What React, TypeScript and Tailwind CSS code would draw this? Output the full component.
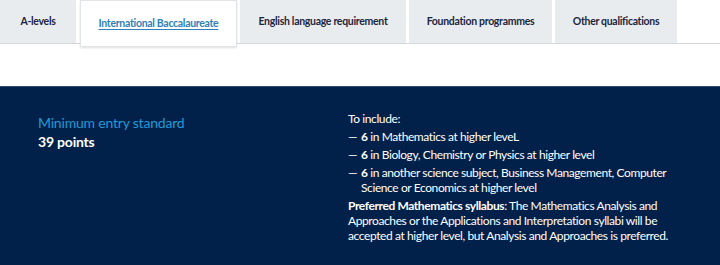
const TABS = [
  { label: 'A-levels', w: 'w-[76px]' },
  { label: 'International Baccalaureate', w: 'w-[157px]', active: true },
  { label: 'English language requirement', w: 'w-[166px]' },
  { label: 'Foundation programmes', w: 'w-[143px]' },
  { label: 'Other qualifications', w: 'w-[122px]' },
]

export default function App() {
  return (
    <div className="w-[720px] h-[265px] bg-white overflow-hidden" style={{ fontFamily: 'Lato, "Open Sans", sans-serif' }}>
      <div className="relative h-[44px] border-b border-[#d4d8dc] flex items-stretch gap-[3px]">
        {TABS.map((tab) =>
          tab.active ? (
            <div
              key={tab.label}
              className={`${tab.w} h-[46px] -mb-[2px] bg-white border border-[#e1e4e7] border-b-0 shadow-[0_2px_2px_rgba(0,0,0,0.12)] z-10 flex items-center justify-center text-[10.5px] tracking-[-0.3px] font-bold text-[#2f7fb8] underline underline-offset-2 ml-[1px]`}
            >
              {tab.label}
            </div>
          ) : (
            <div
              key={tab.label}
              className={`${tab.w} bg-[#e9ecee] flex items-center justify-center text-[10.5px] tracking-[-0.3px] font-bold text-[#1b2640]`}
            >
              {tab.label}
            </div>
          )
        )}
      </div>

      <div className="mt-[42px] h-[180px] bg-[#02214a] border-t border-[#2e4d74] flex">
        <div className="w-[348px] pl-[38px] pt-[27px] tracking-[-0.2px]">
          <div className="text-[14px] leading-[18px] text-[#1f9bd7]">Minimum entry standard</div>
          <div className="text-[14px] leading-[20px] font-bold text-white">39 points</div>
        </div>
        <div className="w-[340px] pt-[24px] text-[12px] leading-[15px] tracking-[-0.4px] text-white">
          <div>To include:</div>
          <ul className="mt-[3px] space-y-[3px]">
            <li className="flex">
              <span className="w-[13px] shrink-0">—</span>
              <span><b>6</b> in Mathematics at higher leveL</span>
            </li>
            <li className="flex">
              <span className="w-[13px] shrink-0">—</span>
              <span><b>6</b> in Biology, Chemistry or Physics at higher level</span>
            </li>
            <li className="flex">
              <span className="w-[13px] shrink-0">—</span>
              <span><b>6</b> in another science subject, Business Management, Computer Science or Economics at higher level</span>
            </li>
          </ul>
          <p className="mt-[3px]">
            <b>Preferred Mathematics syllabus</b>: The Mathematics Analysis and Approaches or the Applications and Interpretation syllabi will be accepted at higher level, but Analysis and Approaches is preferred.
          </p>
        </div>
      </div>
    </div>
  )
}
